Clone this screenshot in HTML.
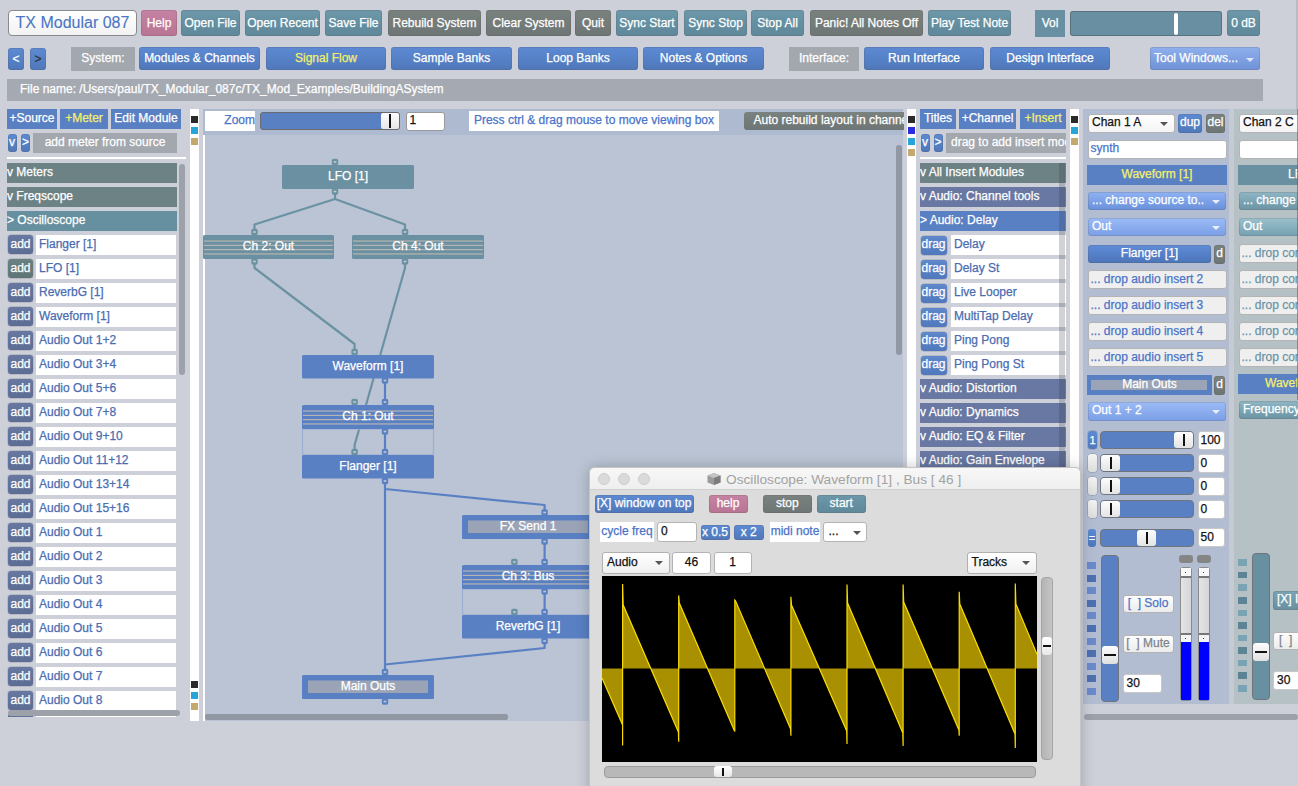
<!DOCTYPE html><html><head><meta charset="utf-8"><style>
html,body{margin:0;padding:0;}
body{width:1298px;height:786px;overflow:hidden;position:relative;background:#cdd0d8;font-family:"Liberation Sans",sans-serif;}
div{position:absolute;box-sizing:border-box;white-space:nowrap;overflow:hidden;-webkit-text-stroke:0.25px currentColor;}
text{-webkit-text-stroke:0.25px currentColor;}

</style></head><body>
<div style="left:8px;top:10px;width:129px;height:26px;line-height:23px;background:linear-gradient(#ffffff,#f2f2f2);color:#4a76c4;font-size:16px;text-align:center;border:1px solid #8a8a8a;border-radius:4px;-webkit-text-stroke:0.1px currentColor;">TX Modular 087</div>
<div style="left:141px;top:10px;width:36px;height:26px;line-height:26px;background:linear-gradient(#c682a2,#b87493);color:#fff;font-size:12px;text-align:center;border-radius:3px;box-shadow:inset 0 0 0 1px rgba(90,80,70,0.18);">Help</div>
<div style="left:181px;top:10px;width:59px;height:26px;line-height:26px;background:linear-gradient(#6c98a9,#5f8899);color:#fff;font-size:12px;text-align:center;border-radius:3px;box-shadow:inset 0 0 0 1px rgba(90,80,70,0.18);">Open File</div>
<div style="left:245px;top:10px;width:75px;height:26px;line-height:26px;background:linear-gradient(#6c98a9,#5f8899);color:#fff;font-size:12px;text-align:center;border-radius:3px;box-shadow:inset 0 0 0 1px rgba(90,80,70,0.18);">Open Recent</div>
<div style="left:325px;top:10px;width:57px;height:26px;line-height:26px;background:linear-gradient(#6c98a9,#5f8899);color:#fff;font-size:12px;text-align:center;border-radius:3px;box-shadow:inset 0 0 0 1px rgba(90,80,70,0.18);">Save File</div>
<div style="left:388px;top:10px;width:93px;height:26px;line-height:26px;background:linear-gradient(#7a8280,#6e7675);color:#fff;font-size:12px;text-align:center;border-radius:3px;box-shadow:inset 0 0 0 1px rgba(90,80,70,0.18);">Rebuild System</div>
<div style="left:486px;top:10px;width:85px;height:26px;line-height:26px;background:linear-gradient(#7a8280,#6e7675);color:#fff;font-size:12px;text-align:center;border-radius:3px;box-shadow:inset 0 0 0 1px rgba(90,80,70,0.18);">Clear System</div>
<div style="left:575px;top:10px;width:36px;height:26px;line-height:26px;background:linear-gradient(#7a8280,#6e7675);color:#fff;font-size:12px;text-align:center;border-radius:3px;box-shadow:inset 0 0 0 1px rgba(90,80,70,0.18);">Quit</div>
<div style="left:616px;top:10px;width:62px;height:26px;line-height:26px;background:linear-gradient(#6c98a9,#5f8899);color:#fff;font-size:12px;text-align:center;border-radius:3px;box-shadow:inset 0 0 0 1px rgba(90,80,70,0.18);">Sync Start</div>
<div style="left:684px;top:10px;width:63px;height:26px;line-height:26px;background:linear-gradient(#6c98a9,#5f8899);color:#fff;font-size:12px;text-align:center;border-radius:3px;box-shadow:inset 0 0 0 1px rgba(90,80,70,0.18);">Sync Stop</div>
<div style="left:751px;top:10px;width:53px;height:26px;line-height:26px;background:linear-gradient(#6c98a9,#5f8899);color:#fff;font-size:12px;text-align:center;border-radius:3px;box-shadow:inset 0 0 0 1px rgba(90,80,70,0.18);">Stop All</div>
<div style="left:810px;top:10px;width:113px;height:26px;line-height:26px;background:linear-gradient(#7a8280,#6e7675);color:#fff;font-size:12px;text-align:center;border-radius:3px;box-shadow:inset 0 0 0 1px rgba(90,80,70,0.18);">Panic! All Notes Off</div>
<div style="left:928px;top:10px;width:83px;height:26px;line-height:26px;background:linear-gradient(#6c98a9,#5f8899);color:#fff;font-size:12px;text-align:center;border-radius:3px;box-shadow:inset 0 0 0 1px rgba(90,80,70,0.18);">Play Test Note</div>
<div style="left:1035px;top:10px;width:30px;height:27px;line-height:27px;background:#6890a2;color:#fff;font-size:12px;text-align:center;">Vol</div>
<div style="left:1070px;top:11px;width:152px;height:25px;line-height:25px;background:#6890a2;color:#fff;font-size:12px;text-align:center;border-radius:3px;box-shadow:inset 0 0 0 1px rgba(60,60,60,0.35);"></div>
<div style="left:1174px;top:13px;width:4px;height:22px;line-height:22px;background:#fff;color:#fff;font-size:12px;text-align:center;border-radius:2px;"></div>
<div style="left:1227px;top:10px;width:33px;height:26px;line-height:26px;background:linear-gradient(#6c98a9,#5f8899);color:#fff;font-size:12px;text-align:center;border-radius:3px;box-shadow:inset 0 0 0 1px rgba(90,80,70,0.18);">0 dB</div>
<div style="left:1296px;top:0px;width:2px;height:109px;line-height:109px;background:#b9bcc4;color:#fff;font-size:12px;text-align:center;"></div>
<div style="left:8px;top:48px;width:16px;height:22px;line-height:22px;background:linear-gradient(#5c8ad3,#4f78ba);color:#fff;font-size:12px;text-align:center;border-radius:3px;box-shadow:inset 0 0 0 1px rgba(90,80,70,0.18);">&lt;</div>
<div style="left:30px;top:48px;width:16px;height:22px;line-height:22px;background:linear-gradient(#5c8ad3,#4f78ba);color:#333;font-size:12px;text-align:center;border-radius:3px;box-shadow:inset 0 0 0 1px rgba(90,80,70,0.18);">&gt;</div>
<div style="left:71px;top:47px;width:64px;height:24px;line-height:23px;background:#a3a7ae;color:#fff;font-size:12px;text-align:center;">System:</div>
<div style="left:139px;top:47px;width:121px;height:23px;line-height:23px;background:linear-gradient(#5c8ad3,#4f78ba);color:#fff;font-size:12px;text-align:center;border-radius:3px;box-shadow:inset 0 0 0 1px rgba(90,80,70,0.18);">Modules &amp; Channels</div>
<div style="left:266px;top:47px;width:120px;height:23px;line-height:23px;background:linear-gradient(#5c8ad3,#4f78ba);color:#f4f06a;font-size:12px;text-align:center;border-radius:3px;box-shadow:inset 0 0 0 1px rgba(90,80,70,0.18);">Signal Flow</div>
<div style="left:391px;top:47px;width:121px;height:23px;line-height:23px;background:linear-gradient(#5c8ad3,#4f78ba);color:#fff;font-size:12px;text-align:center;border-radius:3px;box-shadow:inset 0 0 0 1px rgba(90,80,70,0.18);">Sample Banks</div>
<div style="left:518px;top:47px;width:120px;height:23px;line-height:23px;background:linear-gradient(#5c8ad3,#4f78ba);color:#fff;font-size:12px;text-align:center;border-radius:3px;box-shadow:inset 0 0 0 1px rgba(90,80,70,0.18);">Loop Banks</div>
<div style="left:643px;top:47px;width:121px;height:23px;line-height:23px;background:linear-gradient(#5c8ad3,#4f78ba);color:#fff;font-size:12px;text-align:center;border-radius:3px;box-shadow:inset 0 0 0 1px rgba(90,80,70,0.18);">Notes &amp; Options</div>
<div style="left:789px;top:47px;width:70px;height:24px;line-height:23px;background:#a3a7ae;color:#fff;font-size:12px;text-align:center;">Interface:</div>
<div style="left:864px;top:47px;width:120px;height:23px;line-height:23px;background:linear-gradient(#5c8ad3,#4f78ba);color:#fff;font-size:12px;text-align:center;border-radius:3px;box-shadow:inset 0 0 0 1px rgba(90,80,70,0.18);">Run Interface</div>
<div style="left:990px;top:47px;width:120px;height:23px;line-height:23px;background:linear-gradient(#5c8ad3,#4f78ba);color:#fff;font-size:12px;text-align:center;border-radius:3px;box-shadow:inset 0 0 0 1px rgba(90,80,70,0.18);">Design Interface</div>
<div style="left:1150px;top:47px;width:110px;height:23px;line-height:23px;background:linear-gradient(#8fb0ec,#6f92d8);color:#fff;font-size:12px;text-align:left;padding-left:4px;box-sizing:border-box;border-radius:3px;box-shadow:inset 0 0 0 1px rgba(90,80,70,0.18);">Tool Windows...</div>
<div style="left:1246px;top:57.5px;width:0;height:0;border-left:4px solid transparent;border-right:4px solid transparent;border-top:4.5px solid #dfe6f6;overflow:visible"></div>
<div style="left:7px;top:79px;width:1256px;height:22px;line-height:21px;background:#a5a9b1;color:#fff;font-size:12px;text-align:left;padding-left:13px;box-sizing:border-box;">File name: /Users/paul/TX_Modular_087c/TX_Mod_Examples/BuildingASystem</div>
<div style="left:7px;top:109px;width:50px;height:20px;line-height:18px;background:#5a80c4;color:#fff;font-size:12px;text-align:center;">+Source</div>
<div style="left:60px;top:109px;width:48px;height:20px;line-height:18px;background:#5a80c4;color:#f4f06a;font-size:12px;text-align:center;">+Meter</div>
<div style="left:111px;top:109px;width:70px;height:20px;line-height:18px;background:#5a80c4;color:#fff;font-size:12px;text-align:center;">Edit Module</div>
<div style="left:7.5px;top:133.5px;width:9px;height:18.5px;line-height:16px;background:linear-gradient(#5c8ad3,#4f78ba);color:#fff;font-size:12px;text-align:center;border-radius:3px;box-shadow:inset 0 0 0 1px rgba(90,80,70,0.18);">v</div>
<div style="left:21px;top:133.5px;width:9px;height:18.5px;line-height:17px;background:linear-gradient(#5c8ad3,#4f78ba);color:#fff;font-size:12px;text-align:center;border-radius:3px;box-shadow:inset 0 0 0 1px rgba(90,80,70,0.18);">&gt;</div>
<div style="left:33px;top:133px;width:144px;height:20px;line-height:18px;background:#a3a7ae;color:#fff;font-size:12px;text-align:center;">add meter from source</div>
<div style="left:7px;top:157px;width:179px;height:2px;line-height:2px;background:#ffffff;color:#fff;font-size:12px;text-align:center;"></div>
<div style="left:7px;top:163px;width:170px;height:20px;line-height:18px;background:#6d8285;color:#fff;font-size:12px;text-align:left;">v Meters</div>
<div style="left:7px;top:187px;width:170px;height:20px;line-height:18px;background:#6d8285;color:#fff;font-size:12px;text-align:left;">v Freqscope</div>
<div style="left:7px;top:211px;width:170px;height:20px;line-height:18px;background:#66909f;color:#fff;font-size:12px;text-align:left;">&gt; Oscilloscope</div>
<div style="left:8px;top:235px;width:25px;height:19px;line-height:19px;background:linear-gradient(#6878a0,#5c6c94);color:#fff;font-size:12px;text-align:center;border-radius:3px;box-shadow:0 0 0 0.5px rgba(60,60,60,0.3);">add</div>
<div style="left:36px;top:235px;width:140px;height:20px;line-height:18px;background:#fff;color:#4a6cb0;font-size:12px;text-align:left;padding-left:3px;box-sizing:border-box;">Flanger [1]</div>
<div style="left:8px;top:259px;width:25px;height:19px;line-height:19px;background:linear-gradient(#6a8181,#5f7575);color:#fff;font-size:12px;text-align:center;border-radius:3px;box-shadow:0 0 0 0.5px rgba(60,60,60,0.3);">add</div>
<div style="left:36px;top:259px;width:140px;height:20px;line-height:18px;background:#fff;color:#4a6cb0;font-size:12px;text-align:left;padding-left:3px;box-sizing:border-box;">LFO [1]</div>
<div style="left:8px;top:283px;width:25px;height:19px;line-height:19px;background:linear-gradient(#6878a0,#5c6c94);color:#fff;font-size:12px;text-align:center;border-radius:3px;box-shadow:0 0 0 0.5px rgba(60,60,60,0.3);">add</div>
<div style="left:36px;top:283px;width:140px;height:20px;line-height:18px;background:#fff;color:#4a6cb0;font-size:12px;text-align:left;padding-left:3px;box-sizing:border-box;">ReverbG [1]</div>
<div style="left:8px;top:307px;width:25px;height:19px;line-height:19px;background:linear-gradient(#6878a0,#5c6c94);color:#fff;font-size:12px;text-align:center;border-radius:3px;box-shadow:0 0 0 0.5px rgba(60,60,60,0.3);">add</div>
<div style="left:36px;top:307px;width:140px;height:20px;line-height:18px;background:#fff;color:#4a6cb0;font-size:12px;text-align:left;padding-left:3px;box-sizing:border-box;">Waveform [1]</div>
<div style="left:8px;top:331px;width:25px;height:19px;line-height:19px;background:linear-gradient(#6878a0,#5c6c94);color:#fff;font-size:12px;text-align:center;border-radius:3px;box-shadow:0 0 0 0.5px rgba(60,60,60,0.3);">add</div>
<div style="left:36px;top:331px;width:140px;height:20px;line-height:18px;background:#fff;color:#4a6cb0;font-size:12px;text-align:left;padding-left:3px;box-sizing:border-box;">Audio Out 1+2</div>
<div style="left:8px;top:355px;width:25px;height:19px;line-height:19px;background:linear-gradient(#6878a0,#5c6c94);color:#fff;font-size:12px;text-align:center;border-radius:3px;box-shadow:0 0 0 0.5px rgba(60,60,60,0.3);">add</div>
<div style="left:36px;top:355px;width:140px;height:20px;line-height:18px;background:#fff;color:#4a6cb0;font-size:12px;text-align:left;padding-left:3px;box-sizing:border-box;">Audio Out 3+4</div>
<div style="left:8px;top:379px;width:25px;height:19px;line-height:19px;background:linear-gradient(#6878a0,#5c6c94);color:#fff;font-size:12px;text-align:center;border-radius:3px;box-shadow:0 0 0 0.5px rgba(60,60,60,0.3);">add</div>
<div style="left:36px;top:379px;width:140px;height:20px;line-height:18px;background:#fff;color:#4a6cb0;font-size:12px;text-align:left;padding-left:3px;box-sizing:border-box;">Audio Out 5+6</div>
<div style="left:8px;top:403px;width:25px;height:19px;line-height:19px;background:linear-gradient(#6878a0,#5c6c94);color:#fff;font-size:12px;text-align:center;border-radius:3px;box-shadow:0 0 0 0.5px rgba(60,60,60,0.3);">add</div>
<div style="left:36px;top:403px;width:140px;height:20px;line-height:18px;background:#fff;color:#4a6cb0;font-size:12px;text-align:left;padding-left:3px;box-sizing:border-box;">Audio Out 7+8</div>
<div style="left:8px;top:427px;width:25px;height:19px;line-height:19px;background:linear-gradient(#6878a0,#5c6c94);color:#fff;font-size:12px;text-align:center;border-radius:3px;box-shadow:0 0 0 0.5px rgba(60,60,60,0.3);">add</div>
<div style="left:36px;top:427px;width:140px;height:20px;line-height:18px;background:#fff;color:#4a6cb0;font-size:12px;text-align:left;padding-left:3px;box-sizing:border-box;">Audio Out 9+10</div>
<div style="left:8px;top:451px;width:25px;height:19px;line-height:19px;background:linear-gradient(#6878a0,#5c6c94);color:#fff;font-size:12px;text-align:center;border-radius:3px;box-shadow:0 0 0 0.5px rgba(60,60,60,0.3);">add</div>
<div style="left:36px;top:451px;width:140px;height:20px;line-height:18px;background:#fff;color:#4a6cb0;font-size:12px;text-align:left;padding-left:3px;box-sizing:border-box;">Audio Out 11+12</div>
<div style="left:8px;top:475px;width:25px;height:19px;line-height:19px;background:linear-gradient(#6878a0,#5c6c94);color:#fff;font-size:12px;text-align:center;border-radius:3px;box-shadow:0 0 0 0.5px rgba(60,60,60,0.3);">add</div>
<div style="left:36px;top:475px;width:140px;height:20px;line-height:18px;background:#fff;color:#4a6cb0;font-size:12px;text-align:left;padding-left:3px;box-sizing:border-box;">Audio Out 13+14</div>
<div style="left:8px;top:499px;width:25px;height:19px;line-height:19px;background:linear-gradient(#6878a0,#5c6c94);color:#fff;font-size:12px;text-align:center;border-radius:3px;box-shadow:0 0 0 0.5px rgba(60,60,60,0.3);">add</div>
<div style="left:36px;top:499px;width:140px;height:20px;line-height:18px;background:#fff;color:#4a6cb0;font-size:12px;text-align:left;padding-left:3px;box-sizing:border-box;">Audio Out 15+16</div>
<div style="left:8px;top:523px;width:25px;height:19px;line-height:19px;background:linear-gradient(#6878a0,#5c6c94);color:#fff;font-size:12px;text-align:center;border-radius:3px;box-shadow:0 0 0 0.5px rgba(60,60,60,0.3);">add</div>
<div style="left:36px;top:523px;width:140px;height:20px;line-height:18px;background:#fff;color:#4a6cb0;font-size:12px;text-align:left;padding-left:3px;box-sizing:border-box;">Audio Out 1</div>
<div style="left:8px;top:547px;width:25px;height:19px;line-height:19px;background:linear-gradient(#6878a0,#5c6c94);color:#fff;font-size:12px;text-align:center;border-radius:3px;box-shadow:0 0 0 0.5px rgba(60,60,60,0.3);">add</div>
<div style="left:36px;top:547px;width:140px;height:20px;line-height:18px;background:#fff;color:#4a6cb0;font-size:12px;text-align:left;padding-left:3px;box-sizing:border-box;">Audio Out 2</div>
<div style="left:8px;top:571px;width:25px;height:19px;line-height:19px;background:linear-gradient(#6878a0,#5c6c94);color:#fff;font-size:12px;text-align:center;border-radius:3px;box-shadow:0 0 0 0.5px rgba(60,60,60,0.3);">add</div>
<div style="left:36px;top:571px;width:140px;height:20px;line-height:18px;background:#fff;color:#4a6cb0;font-size:12px;text-align:left;padding-left:3px;box-sizing:border-box;">Audio Out 3</div>
<div style="left:8px;top:595px;width:25px;height:19px;line-height:19px;background:linear-gradient(#6878a0,#5c6c94);color:#fff;font-size:12px;text-align:center;border-radius:3px;box-shadow:0 0 0 0.5px rgba(60,60,60,0.3);">add</div>
<div style="left:36px;top:595px;width:140px;height:20px;line-height:18px;background:#fff;color:#4a6cb0;font-size:12px;text-align:left;padding-left:3px;box-sizing:border-box;">Audio Out 4</div>
<div style="left:8px;top:619px;width:25px;height:19px;line-height:19px;background:linear-gradient(#6878a0,#5c6c94);color:#fff;font-size:12px;text-align:center;border-radius:3px;box-shadow:0 0 0 0.5px rgba(60,60,60,0.3);">add</div>
<div style="left:36px;top:619px;width:140px;height:20px;line-height:18px;background:#fff;color:#4a6cb0;font-size:12px;text-align:left;padding-left:3px;box-sizing:border-box;">Audio Out 5</div>
<div style="left:8px;top:643px;width:25px;height:19px;line-height:19px;background:linear-gradient(#6878a0,#5c6c94);color:#fff;font-size:12px;text-align:center;border-radius:3px;box-shadow:0 0 0 0.5px rgba(60,60,60,0.3);">add</div>
<div style="left:36px;top:643px;width:140px;height:20px;line-height:18px;background:#fff;color:#4a6cb0;font-size:12px;text-align:left;padding-left:3px;box-sizing:border-box;">Audio Out 6</div>
<div style="left:8px;top:667px;width:25px;height:19px;line-height:19px;background:linear-gradient(#6878a0,#5c6c94);color:#fff;font-size:12px;text-align:center;border-radius:3px;box-shadow:0 0 0 0.5px rgba(60,60,60,0.3);">add</div>
<div style="left:36px;top:667px;width:140px;height:20px;line-height:18px;background:#fff;color:#4a6cb0;font-size:12px;text-align:left;padding-left:3px;box-sizing:border-box;">Audio Out 7</div>
<div style="left:8px;top:691px;width:25px;height:19px;line-height:19px;background:linear-gradient(#6878a0,#5c6c94);color:#fff;font-size:12px;text-align:center;border-radius:3px;box-shadow:0 0 0 0.5px rgba(60,60,60,0.3);">add</div>
<div style="left:36px;top:691px;width:140px;height:20px;line-height:18px;background:#fff;color:#4a6cb0;font-size:12px;text-align:left;padding-left:3px;box-sizing:border-box;">Audio Out 8</div>
<div style="left:8px;top:715px;width:25px;height:1.6px;line-height:1.6px;background:#62729a;color:#fff;font-size:12px;text-align:center;"></div>
<div style="left:36px;top:715px;width:140px;height:1.6px;line-height:1.6px;background:#fff;color:#fff;font-size:12px;text-align:center;"></div>
<div style="left:179px;top:164px;width:6px;height:211px;line-height:211px;background:#9da1a9;color:#fff;font-size:12px;text-align:center;border-radius:3px;"></div>
<div style="left:8px;top:710px;width:172px;height:6px;line-height:6px;background:#9da1a9;color:#fff;font-size:12px;text-align:center;border-radius:3px;"></div>
<div style="left:190px;top:109px;width:9px;height:612px;line-height:612px;background:#fff;color:#fff;font-size:12px;text-align:center;"></div>
<div style="left:191px;top:116px;width:7px;height:7px;line-height:7px;background:#2a2a2a;color:#fff;font-size:12px;text-align:center;"></div>
<div style="left:191px;top:127px;width:7px;height:7px;line-height:7px;background:#27a4d8;color:#fff;font-size:12px;text-align:center;"></div>
<div style="left:191px;top:138px;width:7px;height:7px;line-height:7px;background:#c4a870;color:#fff;font-size:12px;text-align:center;"></div>
<div style="left:191px;top:681px;width:7px;height:7px;line-height:7px;background:#2a2a2a;color:#fff;font-size:12px;text-align:center;"></div>
<div style="left:191px;top:692px;width:7px;height:7px;line-height:7px;background:#27a4d8;color:#fff;font-size:12px;text-align:center;"></div>
<div style="left:191px;top:703px;width:7px;height:7px;line-height:7px;background:#c4a870;color:#fff;font-size:12px;text-align:center;"></div>
<div style="left:203px;top:109px;width:700px;height:26px;line-height:26px;background:#aebad0;color:#fff;font-size:12px;text-align:center;"></div>
<div style="left:203px;top:135px;width:2px;height:586px;line-height:586px;background:#ffffff;color:#fff;font-size:12px;text-align:center;"></div>
<div style="left:205px;top:135px;width:698px;height:586px;line-height:586px;background:#bac4d4;color:#fff;font-size:12px;text-align:center;"></div>
<div style="left:205px;top:111px;width:50px;height:20px;line-height:18px;background:#fff;color:#4a74c8;font-size:12px;text-align:right;">Zoom</div>
<div style="left:260px;top:112px;width:140px;height:18px;line-height:15px;background:#5a80c4;color:#fff;font-size:12px;text-align:center;border:1px solid #6a6a70;border-radius:3px;"></div>
<div style="left:381px;top:113px;width:18px;height:16px;line-height:16px;background:linear-gradient(#fdfdfd,#e6e6e6);color:#fff;font-size:12px;text-align:center;border-radius:2px;"></div>
<div style="left:389px;top:114px;width:2px;height:14px;line-height:14px;background:#111;color:#fff;font-size:12px;text-align:center;"></div>
<div style="left:405.5px;top:111.5px;width:39px;height:19px;line-height:15px;background:#fff;color:#111;font-size:12px;text-align:left;padding-left:3px;box-sizing:border-box;border:1px solid #999;border-radius:3px;">1</div>
<div style="left:469px;top:111px;width:250px;height:20px;line-height:18px;background:#fff;color:#4a74c8;font-size:12px;text-align:center;">Press ctrl &amp; drag mouse to move viewing box</div>
<div style="left:743.5px;top:111.5px;width:160px;height:18.5px;line-height:16px;background:linear-gradient(#7a8280,#6e7675);color:#fff;font-size:12px;text-align:left;padding-left:10px;box-sizing:border-box;border-radius:3px 0 0 3px;">Auto rebuild layout in channe</div>
<div style="left:896px;top:145px;width:6px;height:210px;line-height:210px;background:#9198a4;color:#fff;font-size:12px;text-align:center;border-radius:3px;"></div>
<div style="left:205px;top:714px;width:303px;height:6px;line-height:6px;background:#9198a4;color:#fff;font-size:12px;text-align:center;border-radius:3px;"></div>
<div style="left:907px;top:109px;width:9px;height:612px;line-height:612px;background:#fff;color:#fff;font-size:12px;text-align:center;"></div>
<div style="left:908px;top:116px;width:7px;height:7px;line-height:7px;background:#2a2a2a;color:#fff;font-size:12px;text-align:center;"></div>
<div style="left:908px;top:127px;width:7px;height:7px;line-height:7px;background:#2b2be0;color:#fff;font-size:12px;text-align:center;"></div>
<div style="left:908px;top:138px;width:7px;height:7px;line-height:7px;background:#27a4d8;color:#fff;font-size:12px;text-align:center;"></div>
<div style="left:908px;top:149px;width:7px;height:7px;line-height:7px;background:#c4a870;color:#fff;font-size:12px;text-align:center;"></div>
<svg style="position:absolute;left:0;top:0;overflow:visible" width="1298" height="786" viewBox="0 0 1298 786"><g font-family="Liberation Sans, sans-serif"><polyline points="335,194 335,199 254.5,224.5 254.5,230" fill="none" stroke="#6a92a3" stroke-width="2.2" stroke-linejoin="round"/><polyline points="335,199 405,224.5 405,230" fill="none" stroke="#6a92a3" stroke-width="2.2" stroke-linejoin="round"/><polyline points="254.5,264 254.5,268 354.6,344 354.6,350" fill="none" stroke="#6a92a3" stroke-width="2.2" stroke-linejoin="round"/><polyline points="405,264 405,268 354.6,445 354.6,450" fill="none" stroke="#6a92a3" stroke-width="2.2" stroke-linejoin="round"/><polyline points="385,383 385,400" fill="none" stroke="#5a80c4" stroke-width="2.2" stroke-linejoin="round"/><polyline points="385,434 385,450" fill="none" stroke="#5a80c4" stroke-width="2.2" stroke-linejoin="round"/><polyline points="385,484 385,489 544.6,505 544.6,511" fill="none" stroke="#5a80c4" stroke-width="2.2" stroke-linejoin="round"/><polyline points="385,489 385,664.5 385,670" fill="none" stroke="#5a80c4" stroke-width="2.2" stroke-linejoin="round"/><polyline points="544.6,544 544.6,560" fill="none" stroke="#5a80c4" stroke-width="2.2" stroke-linejoin="round"/><polyline points="544.6,594 544.6,610" fill="none" stroke="#5a80c4" stroke-width="2.2" stroke-linejoin="round"/><polyline points="544.6,644 544.6,648 385,664.5" fill="none" stroke="#5a80c4" stroke-width="2.2" stroke-linejoin="round"/><rect x="302.5" y="429" width="131" height="26" fill="none" stroke="#9eaed0" stroke-width="1.2"/><rect x="462.5" y="589" width="140" height="26" fill="none" stroke="#9eaed0" stroke-width="1.2"/><rect x="282" y="165" width="132" height="24" rx="1.5" fill="#6a90a2"/><text x="348.0" y="179.9" text-anchor="middle" font-size="12" fill="#fff" stroke="#fff" stroke-width="0.25">LFO [1]</text><rect x="203" y="235" width="131" height="24" rx="1.5" fill="#6a90a2"/><rect x="204" y="240.5" width="129" height="1.1" fill="#bdb9b2"/><rect x="204" y="244.8" width="129" height="1.1" fill="#bdb9b2"/><rect x="204" y="249.1" width="129" height="1.1" fill="#bdb9b2"/><rect x="204" y="253.4" width="129" height="1.1" fill="#bdb9b2"/><text x="268.5" y="249.9" text-anchor="middle" font-size="12" fill="#fff" stroke="#fff" stroke-width="0.25">Ch 2: Out</text><rect x="352" y="235" width="132" height="24" rx="1.5" fill="#6a90a2"/><rect x="353" y="240.5" width="130" height="1.1" fill="#bdb9b2"/><rect x="353" y="244.8" width="130" height="1.1" fill="#bdb9b2"/><rect x="353" y="249.1" width="130" height="1.1" fill="#bdb9b2"/><rect x="353" y="253.4" width="130" height="1.1" fill="#bdb9b2"/><text x="418.0" y="249.9" text-anchor="middle" font-size="12" fill="#fff" stroke="#fff" stroke-width="0.25">Ch 4: Out</text><rect x="302" y="355" width="132" height="23.5" rx="1.5" fill="#5a80c4"/><text x="368.0" y="369.65" text-anchor="middle" font-size="12" fill="#fff" stroke="#fff" stroke-width="0.25">Waveform [1]</text><rect x="302" y="405" width="132" height="24" rx="1.5" fill="#5a80c4"/><rect x="303" y="410.5" width="130" height="1.1" fill="#bdb9b2"/><rect x="303" y="414.8" width="130" height="1.1" fill="#bdb9b2"/><rect x="303" y="419.1" width="130" height="1.1" fill="#bdb9b2"/><rect x="303" y="423.4" width="130" height="1.1" fill="#bdb9b2"/><text x="368.0" y="419.9" text-anchor="middle" font-size="12" fill="#fff" stroke="#fff" stroke-width="0.25">Ch 1: Out</text><rect x="302" y="455" width="132" height="23.5" rx="1.5" fill="#5a80c4"/><text x="368.0" y="469.65" text-anchor="middle" font-size="12" fill="#fff" stroke="#fff" stroke-width="0.25">Flanger [1]</text><rect x="462" y="515" width="132" height="24" rx="1.5" fill="#5a80c4"/><rect x="468" y="520.5" width="120" height="12.5" fill="#9ba4b6"/><text x="528.0" y="529.9" text-anchor="middle" font-size="12" fill="#fff" stroke="#fff" stroke-width="0.25">FX Send 1</text><rect x="462" y="565" width="132" height="24" rx="1.5" fill="#5a80c4"/><rect x="463" y="570.5" width="130" height="1.1" fill="#bdb9b2"/><rect x="463" y="574.8" width="130" height="1.1" fill="#bdb9b2"/><rect x="463" y="579.1" width="130" height="1.1" fill="#bdb9b2"/><rect x="463" y="583.4" width="130" height="1.1" fill="#bdb9b2"/><text x="528.0" y="579.9" text-anchor="middle" font-size="12" fill="#fff" stroke="#fff" stroke-width="0.25">Ch 3: Bus</text><rect x="462" y="615" width="132" height="23.5" rx="1.5" fill="#5a80c4"/><text x="528.0" y="629.65" text-anchor="middle" font-size="12" fill="#fff" stroke="#fff" stroke-width="0.25">ReverbG [1]</text><rect x="302" y="675" width="132" height="24" rx="1.5" fill="#5a80c4"/><rect x="308" y="680.5" width="120" height="12.5" fill="#9ba4b6"/><text x="368.0" y="689.9" text-anchor="middle" font-size="12" fill="#fff" stroke="#fff" stroke-width="0.25">Main Outs</text><rect x="331.8" y="158.8" width="6.4" height="6.4" rx="1.8" fill="#6a92a3"/><rect x="333.7" y="161.2" width="2.6" height="1.6" fill="#c2cad6"/><rect x="331.8" y="188.3" width="6.4" height="6.4" rx="1.8" fill="#6a92a3"/><rect x="333.7" y="190.7" width="2.6" height="1.6" fill="#c2cad6"/><rect x="251.3" y="228.8" width="6.4" height="6.4" rx="1.8" fill="#6a92a3"/><rect x="253.2" y="231.2" width="2.6" height="1.6" fill="#c2cad6"/><rect x="251.3" y="258.3" width="6.4" height="6.4" rx="1.8" fill="#6a92a3"/><rect x="253.2" y="260.7" width="2.6" height="1.6" fill="#c2cad6"/><rect x="401.8" y="228.8" width="6.4" height="6.4" rx="1.8" fill="#6a92a3"/><rect x="403.7" y="231.2" width="2.6" height="1.6" fill="#c2cad6"/><rect x="401.8" y="258.3" width="6.4" height="6.4" rx="1.8" fill="#6a92a3"/><rect x="403.7" y="260.7" width="2.6" height="1.6" fill="#c2cad6"/><rect x="351.40000000000003" y="348.8" width="6.4" height="6.4" rx="1.8" fill="#6a92a3"/><rect x="353.3" y="351.2" width="2.6" height="1.6" fill="#c2cad6"/><rect x="381.8" y="377.3" width="6.4" height="6.4" rx="1.8" fill="#5a80c4"/><rect x="383.7" y="379.7" width="2.6" height="1.6" fill="#c2cad6"/><rect x="351.40000000000003" y="398.8" width="6.4" height="6.4" rx="1.8" fill="#6a92a3"/><rect x="353.3" y="401.2" width="2.6" height="1.6" fill="#c2cad6"/><rect x="381.8" y="398.8" width="6.4" height="6.4" rx="1.8" fill="#5a80c4"/><rect x="383.7" y="401.2" width="2.6" height="1.6" fill="#c2cad6"/><rect x="381.8" y="428.3" width="6.4" height="6.4" rx="1.8" fill="#5a80c4"/><rect x="383.7" y="430.7" width="2.6" height="1.6" fill="#c2cad6"/><rect x="351.40000000000003" y="448.8" width="6.4" height="6.4" rx="1.8" fill="#6a92a3"/><rect x="353.3" y="451.2" width="2.6" height="1.6" fill="#c2cad6"/><rect x="381.8" y="448.8" width="6.4" height="6.4" rx="1.8" fill="#5a80c4"/><rect x="383.7" y="451.2" width="2.6" height="1.6" fill="#c2cad6"/><rect x="381.8" y="477.8" width="6.4" height="6.4" rx="1.8" fill="#5a80c4"/><rect x="383.7" y="480.2" width="2.6" height="1.6" fill="#c2cad6"/><rect x="541.4" y="509.3" width="6.4" height="6.4" rx="1.8" fill="#5a80c4"/><rect x="543.3000000000001" y="511.7" width="2.6" height="1.6" fill="#c2cad6"/><rect x="541.4" y="538.3" width="6.4" height="6.4" rx="1.8" fill="#5a80c4"/><rect x="543.3000000000001" y="540.7" width="2.6" height="1.6" fill="#c2cad6"/><rect x="511.2" y="558.8" width="6.4" height="6.4" rx="1.8" fill="#6a92a3"/><rect x="513.1" y="561.2" width="2.6" height="1.6" fill="#c2cad6"/><rect x="541.4" y="558.8" width="6.4" height="6.4" rx="1.8" fill="#5a80c4"/><rect x="543.3000000000001" y="561.2" width="2.6" height="1.6" fill="#c2cad6"/><rect x="541.4" y="588.3" width="6.4" height="6.4" rx="1.8" fill="#5a80c4"/><rect x="543.3000000000001" y="590.7" width="2.6" height="1.6" fill="#c2cad6"/><rect x="511.2" y="608.8" width="6.4" height="6.4" rx="1.8" fill="#6a92a3"/><rect x="513.1" y="611.2" width="2.6" height="1.6" fill="#c2cad6"/><rect x="541.4" y="608.8" width="6.4" height="6.4" rx="1.8" fill="#5a80c4"/><rect x="543.3000000000001" y="611.2" width="2.6" height="1.6" fill="#c2cad6"/><rect x="541.4" y="637.8" width="6.4" height="6.4" rx="1.8" fill="#5a80c4"/><rect x="543.3000000000001" y="640.2" width="2.6" height="1.6" fill="#c2cad6"/><rect x="381.8" y="668.8" width="6.4" height="6.4" rx="1.8" fill="#5a80c4"/><rect x="383.7" y="671.2" width="2.6" height="1.6" fill="#c2cad6"/><rect x="381.8" y="698.3" width="6.4" height="6.4" rx="1.8" fill="#5a80c4"/><rect x="383.7" y="700.7" width="2.6" height="1.6" fill="#c2cad6"/></g></svg>
<div style="left:199px;top:135px;width:4px;height:586px;line-height:586px;background:#cdd0d8;color:#fff;font-size:12px;text-align:center;"></div>
<div style="left:203px;top:135px;width:2px;height:100px;line-height:100px;background:#ffffff;color:#fff;font-size:12px;text-align:center;"></div>
<div style="left:203px;top:259px;width:2px;height:462px;line-height:462px;background:#ffffff;color:#fff;font-size:12px;text-align:center;"></div>
<div style="left:205px;top:714px;width:303px;height:6px;line-height:6px;background:#9198a4;color:#fff;font-size:12px;text-align:center;border-radius:3px;"></div>
<div style="left:920px;top:109px;width:36px;height:20px;line-height:18px;background:#5a80c4;color:#fff;font-size:12px;text-align:center;">Titles</div>
<div style="left:959px;top:109px;width:57px;height:20px;line-height:18px;background:#5a80c4;color:#fff;font-size:12px;text-align:center;">+Channel</div>
<div style="left:1020px;top:109px;width:46px;height:20px;line-height:18px;background:#5a80c4;color:#f4f06a;font-size:12px;text-align:center;">+Insert</div>
<div style="left:920.5px;top:133.5px;width:9px;height:18.5px;line-height:16px;background:linear-gradient(#5c8ad3,#4f78ba);color:#fff;font-size:12px;text-align:center;border-radius:3px;box-shadow:inset 0 0 0 1px rgba(90,80,70,0.18);">v</div>
<div style="left:933.5px;top:133.5px;width:9px;height:18.5px;line-height:17px;background:linear-gradient(#5c8ad3,#4f78ba);color:#fff;font-size:12px;text-align:center;border-radius:3px;box-shadow:inset 0 0 0 1px rgba(90,80,70,0.18);">&gt;</div>
<div style="left:946px;top:133px;width:120px;height:20px;line-height:18px;background:#a3a7ae;color:#fff;font-size:12px;text-align:left;padding-left:5px;box-sizing:border-box;">drag to add insert modules</div>
<div style="left:920px;top:157px;width:146px;height:2px;line-height:2px;background:#ffffff;color:#fff;font-size:12px;text-align:center;"></div>
<div style="left:920px;top:163px;width:146px;height:20px;line-height:18px;background:#6d8285;color:#fff;font-size:12px;text-align:left;">v All Insert Modules</div>
<div style="left:920px;top:187px;width:146px;height:20px;line-height:18px;background:#6878a3;color:#fff;font-size:12px;text-align:left;">v Audio: Channel tools</div>
<div style="left:920px;top:211px;width:146px;height:20px;line-height:18px;background:#5a80c4;color:#fff;font-size:12px;text-align:left;">&gt; Audio: Delay</div>
<div style="left:920px;top:379px;width:146px;height:20px;line-height:18px;background:#6878a3;color:#fff;font-size:12px;text-align:left;">v Audio: Distortion</div>
<div style="left:920px;top:403px;width:146px;height:20px;line-height:18px;background:#6878a3;color:#fff;font-size:12px;text-align:left;">v Audio: Dynamics</div>
<div style="left:920px;top:427px;width:146px;height:20px;line-height:18px;background:#6878a3;color:#fff;font-size:12px;text-align:left;">v Audio: EQ &amp; Filter</div>
<div style="left:920px;top:451px;width:146px;height:20px;line-height:18px;background:#6878a3;color:#fff;font-size:12px;text-align:left;">v Audio: Gain Envelope</div>
<div style="left:920.5px;top:236px;width:26.5px;height:18.5px;line-height:16px;background:linear-gradient(#5f88cc,#5078bc);color:#fff;font-size:12px;text-align:left;padding-left:1px;box-sizing:border-box;border-radius:3px;box-shadow:0 0 0 0.5px rgba(60,60,60,0.3);">drag</div>
<div style="left:951px;top:235px;width:115px;height:20px;line-height:18px;background:#fff;color:#4a6cb0;font-size:12px;text-align:left;padding-left:3px;box-sizing:border-box;">Delay</div>
<div style="left:920.5px;top:260px;width:26.5px;height:18.5px;line-height:16px;background:linear-gradient(#5f88cc,#5078bc);color:#fff;font-size:12px;text-align:left;padding-left:1px;box-sizing:border-box;border-radius:3px;box-shadow:0 0 0 0.5px rgba(60,60,60,0.3);">drag</div>
<div style="left:951px;top:259px;width:115px;height:20px;line-height:18px;background:#fff;color:#4a6cb0;font-size:12px;text-align:left;padding-left:3px;box-sizing:border-box;">Delay St</div>
<div style="left:920.5px;top:284px;width:26.5px;height:18.5px;line-height:16px;background:linear-gradient(#5f88cc,#5078bc);color:#fff;font-size:12px;text-align:left;padding-left:1px;box-sizing:border-box;border-radius:3px;box-shadow:0 0 0 0.5px rgba(60,60,60,0.3);">drag</div>
<div style="left:951px;top:283px;width:115px;height:20px;line-height:18px;background:#fff;color:#4a6cb0;font-size:12px;text-align:left;padding-left:3px;box-sizing:border-box;">Live Looper</div>
<div style="left:920.5px;top:308px;width:26.5px;height:18.5px;line-height:16px;background:linear-gradient(#5f88cc,#5078bc);color:#fff;font-size:12px;text-align:left;padding-left:1px;box-sizing:border-box;border-radius:3px;box-shadow:0 0 0 0.5px rgba(60,60,60,0.3);">drag</div>
<div style="left:951px;top:307px;width:115px;height:20px;line-height:18px;background:#fff;color:#4a6cb0;font-size:12px;text-align:left;padding-left:3px;box-sizing:border-box;">MultiTap Delay</div>
<div style="left:920.5px;top:332px;width:26.5px;height:18.5px;line-height:16px;background:linear-gradient(#5f88cc,#5078bc);color:#fff;font-size:12px;text-align:left;padding-left:1px;box-sizing:border-box;border-radius:3px;box-shadow:0 0 0 0.5px rgba(60,60,60,0.3);">drag</div>
<div style="left:951px;top:331px;width:115px;height:20px;line-height:18px;background:#fff;color:#4a6cb0;font-size:12px;text-align:left;padding-left:3px;box-sizing:border-box;">Ping Pong</div>
<div style="left:920.5px;top:356px;width:26.5px;height:18.5px;line-height:16px;background:linear-gradient(#5f88cc,#5078bc);color:#fff;font-size:12px;text-align:left;padding-left:1px;box-sizing:border-box;border-radius:3px;box-shadow:0 0 0 0.5px rgba(60,60,60,0.3);">drag</div>
<div style="left:951px;top:355px;width:115px;height:20px;line-height:18px;background:#fff;color:#4a6cb0;font-size:12px;text-align:left;padding-left:3px;box-sizing:border-box;">Ping Pong St</div>
<div style="left:1059px;top:163px;width:6px;height:310px;line-height:310px;background:rgba(40,50,60,0.22);color:#fff;font-size:12px;text-align:center;"></div>
<div style="left:1070px;top:109px;width:9px;height:612px;line-height:612px;background:#fff;color:#fff;font-size:12px;text-align:center;"></div>
<div style="left:1071px;top:116px;width:7px;height:7px;line-height:7px;background:#2a2a2a;color:#fff;font-size:12px;text-align:center;"></div>
<div style="left:1071px;top:127px;width:7px;height:7px;line-height:7px;background:#27a4d8;color:#fff;font-size:12px;text-align:center;"></div>
<div style="left:1071px;top:138px;width:7px;height:7px;line-height:7px;background:#c4a870;color:#fff;font-size:12px;text-align:center;"></div>
<div style="left:1083px;top:109px;width:146px;height:595px;line-height:595px;background:#b3bdd2;color:#fff;font-size:12px;text-align:center;"></div>
<div style="left:1229px;top:109px;width:5px;height:595px;line-height:595px;background:#c6cad2;color:#fff;font-size:12px;text-align:center;"></div>
<div style="left:1234px;top:109px;width:64px;height:595px;line-height:595px;background:#b6c1c6;color:#fff;font-size:12px;text-align:center;"></div>
<div style="left:1084px;top:714px;width:214px;height:6px;line-height:6px;background:#9da1a9;color:#fff;font-size:12px;text-align:center;border-radius:3px;"></div>
<div style="left:1087.5px;top:113.5px;width:87px;height:19px;line-height:15px;background:linear-gradient(#ffffff,#f4f4f4);color:#111;font-size:12px;text-align:left;padding-left:3.5px;box-sizing:border-box;border:1px solid #b4b4b4;border-radius:3px;">Chan 1 A</div>
<div style="left:1160px;top:122px;width:0;height:0;border-left:4px solid transparent;border-right:4px solid transparent;border-top:4px solid #555;overflow:visible"></div>
<div style="left:1178px;top:114px;width:24px;height:18.5px;line-height:16px;background:linear-gradient(#5c8ad3,#4f78ba);color:#fff;font-size:12px;text-align:center;border-radius:3px;box-shadow:inset 0 0 0 1px rgba(90,80,70,0.18);">dup</div>
<div style="left:1206px;top:114px;width:19px;height:18.5px;line-height:16px;background:linear-gradient(#7a8280,#6e7675);color:#fff;font-size:12px;text-align:center;border-radius:3px;box-shadow:inset 0 0 0 1px rgba(90,80,70,0.18);">del</div>
<div style="left:1087.5px;top:139.5px;width:139px;height:19px;line-height:15px;background:#fff;color:#4a74c8;font-size:12px;text-align:left;padding-left:2px;box-sizing:border-box;border:1px solid #b4b4b4;border-radius:3px;">synth</div>
<div style="left:1087px;top:165px;width:140px;height:20px;line-height:18px;background:#5a80c4;color:#f4f06a;font-size:12px;text-align:center;">Waveform [1]</div>
<div style="left:1088px;top:191.8px;width:138px;height:18.5px;line-height:16px;background:linear-gradient(#8fb2f2,#6a90dc);color:#fff;font-size:12px;text-align:left;padding-left:4px;box-sizing:border-box;border-radius:3px;box-shadow:inset 0 0 0 1px rgba(90,80,70,0.18);">... change source to..</div>
<div style="left:1212px;top:200px;width:0;height:0;border-left:4px solid transparent;border-right:4px solid transparent;border-top:4px solid #e8eefa;overflow:visible"></div>
<div style="left:1088px;top:217.5px;width:138px;height:18.8px;line-height:16px;background:linear-gradient(#9cbcf6,#7a9ee6);color:#fff;font-size:12px;text-align:left;padding-left:4px;box-sizing:border-box;border-radius:3px;box-shadow:inset 0 0 0 1px rgba(90,80,70,0.18);">Out</div>
<div style="left:1212px;top:226px;width:0;height:0;border-left:4px solid transparent;border-right:4px solid transparent;border-top:4px solid #e8eefa;overflow:visible"></div>
<div style="left:1088px;top:244.8px;width:123px;height:18.5px;line-height:16px;background:linear-gradient(#5f8cd8,#4c74b8);color:#fff;font-size:12px;text-align:center;border-radius:3px;box-shadow:inset 0 0 0 1px rgba(90,80,70,0.18);">Flanger [1]</div>
<div style="left:1214px;top:245px;width:11px;height:18.5px;line-height:16px;background:linear-gradient(#7a8280,#6e7675);color:#fff;font-size:12px;text-align:center;border-radius:3px;box-shadow:inset 0 0 0 1px rgba(90,80,70,0.18);">d</div>
<div style="left:1087.5px;top:270px;width:139px;height:19px;line-height:16px;background:#efefef;color:#4a74c8;font-size:12px;text-align:left;padding-left:2px;box-sizing:border-box;border:1px solid #b4b4b4;border-radius:3px;">... drop audio insert 2</div>
<div style="left:1087.5px;top:296px;width:139px;height:19px;line-height:16px;background:#efefef;color:#4a74c8;font-size:12px;text-align:left;padding-left:2px;box-sizing:border-box;border:1px solid #b4b4b4;border-radius:3px;">... drop audio insert 3</div>
<div style="left:1087.5px;top:322px;width:139px;height:19px;line-height:16px;background:#efefef;color:#4a74c8;font-size:12px;text-align:left;padding-left:2px;box-sizing:border-box;border:1px solid #b4b4b4;border-radius:3px;">... drop audio insert 4</div>
<div style="left:1087.5px;top:348px;width:139px;height:19px;line-height:16px;background:#efefef;color:#4a74c8;font-size:12px;text-align:left;padding-left:2px;box-sizing:border-box;border:1px solid #b4b4b4;border-radius:3px;">... drop audio insert 5</div>
<div style="left:1087px;top:375px;width:125px;height:20px;line-height:20px;background:#5a80c4;color:#fff;font-size:12px;text-align:center;"></div>
<div style="left:1091px;top:380px;width:116px;height:10px;line-height:10px;background:#9ba4b6;color:#fff;font-size:12px;text-align:center;"></div>
<div style="left:1087px;top:375px;width:125px;height:20px;line-height:18px;background:transparent;color:#fff;font-size:12px;text-align:center;">Main Outs</div>
<div style="left:1214px;top:376px;width:11px;height:18.5px;line-height:16px;background:linear-gradient(#7a8280,#6e7675);color:#fff;font-size:12px;text-align:center;border-radius:3px;box-shadow:inset 0 0 0 1px rgba(90,80,70,0.18);">d</div>
<div style="left:1088px;top:402px;width:138px;height:18.5px;line-height:16px;background:linear-gradient(#9cbcf6,#7a9ee6);color:#fff;font-size:12px;text-align:left;padding-left:4px;box-sizing:border-box;border-radius:3px;box-shadow:inset 0 0 0 1px rgba(90,80,70,0.18);">Out 1 + 2</div>
<div style="left:1212px;top:410px;width:0;height:0;border-left:4px solid transparent;border-right:4px solid transparent;border-top:4px solid #e8eefa;overflow:visible"></div>
<div style="left:1088px;top:431px;width:9px;height:18px;line-height:18px;background:linear-gradient(#5c8ad3,#4f78ba);color:#fff;font-size:11px;text-align:center;border-radius:3px;box-shadow:0 0 0 0.5px rgba(60,60,60,0.35);">1</div>
<div style="left:1100px;top:431px;width:94px;height:18px;line-height:15px;background:#5a80c4;color:#fff;font-size:12px;text-align:center;border:1px solid #70747c;border-radius:4px;"></div>
<div style="left:1174px;top:432px;width:19px;height:16px;line-height:16px;background:linear-gradient(#fdfdfd,#e4e4e4);color:#fff;font-size:12px;text-align:center;border-radius:3px;"></div>
<div style="left:1183px;top:434px;width:2px;height:12px;line-height:12px;background:#111;color:#fff;font-size:12px;text-align:center;"></div>
<div style="left:1197.5px;top:430.5px;width:27.5px;height:19px;line-height:16px;background:#fff;color:#111;font-size:12px;text-align:left;padding-left:2px;box-sizing:border-box;border-radius:3px;border:1px solid #c8c8c8;">100</div>
<div style="left:1088px;top:454px;width:9px;height:18px;line-height:18px;background:linear-gradient(#f4f4f4,#dcdcdc);color:#fff;font-size:11px;text-align:center;border-radius:3px;box-shadow:0 0 0 0.5px rgba(60,60,60,0.35);"></div>
<div style="left:1100px;top:454px;width:94px;height:18px;line-height:15px;background:#5a80c4;color:#fff;font-size:12px;text-align:center;border:1px solid #70747c;border-radius:4px;"></div>
<div style="left:1101px;top:455px;width:19px;height:16px;line-height:16px;background:linear-gradient(#fdfdfd,#e4e4e4);color:#fff;font-size:12px;text-align:center;border-radius:3px;"></div>
<div style="left:1110px;top:457px;width:2px;height:12px;line-height:12px;background:#111;color:#fff;font-size:12px;text-align:center;"></div>
<div style="left:1197.5px;top:453.5px;width:27.5px;height:19px;line-height:16px;background:#fff;color:#111;font-size:12px;text-align:left;padding-left:2px;box-sizing:border-box;border-radius:3px;border:1px solid #c8c8c8;">0</div>
<div style="left:1088px;top:477px;width:9px;height:18px;line-height:18px;background:linear-gradient(#f4f4f4,#dcdcdc);color:#fff;font-size:11px;text-align:center;border-radius:3px;box-shadow:0 0 0 0.5px rgba(60,60,60,0.35);"></div>
<div style="left:1100px;top:477px;width:94px;height:18px;line-height:15px;background:#5a80c4;color:#fff;font-size:12px;text-align:center;border:1px solid #70747c;border-radius:4px;"></div>
<div style="left:1101px;top:478px;width:19px;height:16px;line-height:16px;background:linear-gradient(#fdfdfd,#e4e4e4);color:#fff;font-size:12px;text-align:center;border-radius:3px;"></div>
<div style="left:1110px;top:480px;width:2px;height:12px;line-height:12px;background:#111;color:#fff;font-size:12px;text-align:center;"></div>
<div style="left:1197.5px;top:476.5px;width:27.5px;height:19px;line-height:16px;background:#fff;color:#111;font-size:12px;text-align:left;padding-left:2px;box-sizing:border-box;border-radius:3px;border:1px solid #c8c8c8;">0</div>
<div style="left:1088px;top:500px;width:9px;height:18px;line-height:18px;background:linear-gradient(#f4f4f4,#dcdcdc);color:#fff;font-size:11px;text-align:center;border-radius:3px;box-shadow:0 0 0 0.5px rgba(60,60,60,0.35);"></div>
<div style="left:1100px;top:500px;width:94px;height:18px;line-height:15px;background:#5a80c4;color:#fff;font-size:12px;text-align:center;border:1px solid #70747c;border-radius:4px;"></div>
<div style="left:1101px;top:501px;width:19px;height:16px;line-height:16px;background:linear-gradient(#fdfdfd,#e4e4e4);color:#fff;font-size:12px;text-align:center;border-radius:3px;"></div>
<div style="left:1110px;top:503px;width:2px;height:12px;line-height:12px;background:#111;color:#fff;font-size:12px;text-align:center;"></div>
<div style="left:1197.5px;top:499.5px;width:27.5px;height:19px;line-height:16px;background:#fff;color:#111;font-size:12px;text-align:left;padding-left:2px;box-sizing:border-box;border-radius:3px;border:1px solid #c8c8c8;">0</div>
<div style="left:1088px;top:529px;width:8px;height:18px;line-height:18px;background:linear-gradient(#5c8ad3,#4f78ba);color:#fff;font-size:11px;text-align:center;border-radius:3px;">=</div>
<div style="left:1100px;top:529px;width:94px;height:18px;line-height:15px;background:#5a80c4;color:#fff;font-size:12px;text-align:center;border:1px solid #70747c;border-radius:4px;"></div>
<div style="left:1137px;top:530px;width:19px;height:16px;line-height:16px;background:linear-gradient(#fdfdfd,#e4e4e4);color:#fff;font-size:12px;text-align:center;border-radius:3px;"></div>
<div style="left:1146px;top:532px;width:2px;height:12px;line-height:12px;background:#111;color:#fff;font-size:12px;text-align:center;"></div>
<div style="left:1197.5px;top:527.5px;width:27.5px;height:19px;line-height:16px;background:#fff;color:#111;font-size:12px;text-align:left;padding-left:2px;box-sizing:border-box;border-radius:3px;border:1px solid #c8c8c8;">50</div>
<div style="left:1087px;top:562.0px;width:9px;height:7px;line-height:7px;background:#6a8acc;color:#fff;font-size:12px;text-align:center;"></div>
<div style="left:1087px;top:574.6px;width:9px;height:7px;line-height:7px;background:#4f70b0;color:#fff;font-size:12px;text-align:center;"></div>
<div style="left:1087px;top:587.2px;width:9px;height:7px;line-height:7px;background:#6a8acc;color:#fff;font-size:12px;text-align:center;"></div>
<div style="left:1087px;top:599.8px;width:9px;height:7px;line-height:7px;background:#4f70b0;color:#fff;font-size:12px;text-align:center;"></div>
<div style="left:1087px;top:612.4px;width:9px;height:7px;line-height:7px;background:#6a8acc;color:#fff;font-size:12px;text-align:center;"></div>
<div style="left:1087px;top:625.0px;width:9px;height:7px;line-height:7px;background:#4f70b0;color:#fff;font-size:12px;text-align:center;"></div>
<div style="left:1087px;top:637.6px;width:9px;height:7px;line-height:7px;background:#6a8acc;color:#fff;font-size:12px;text-align:center;"></div>
<div style="left:1087px;top:650.2px;width:9px;height:7px;line-height:7px;background:#4f70b0;color:#fff;font-size:12px;text-align:center;"></div>
<div style="left:1087px;top:662.8px;width:9px;height:7px;line-height:7px;background:#6a8acc;color:#fff;font-size:12px;text-align:center;"></div>
<div style="left:1087px;top:675.4px;width:9px;height:7px;line-height:7px;background:#4f70b0;color:#fff;font-size:12px;text-align:center;"></div>
<div style="left:1087px;top:688.0px;width:9px;height:7px;line-height:7px;background:#6a8acc;color:#fff;font-size:12px;text-align:center;"></div>
<div style="left:1101px;top:555px;width:18px;height:147px;line-height:144px;background:#5a80c4;color:#fff;font-size:12px;text-align:center;border:1px solid #70747c;border-radius:4px;"></div>
<div style="left:1102px;top:645.5px;width:16px;height:18.5px;line-height:18.5px;background:linear-gradient(#fdfdfd,#e0e0e0);color:#fff;font-size:12px;text-align:center;border-radius:3px;"></div>
<div style="left:1104px;top:653.5px;width:12px;height:2px;line-height:2px;background:#111;color:#fff;font-size:12px;text-align:center;"></div>
<div style="left:1122.5px;top:594.5px;width:51px;height:18.5px;line-height:15px;background:linear-gradient(#fdfdfd,#ececec);color:#4a74c8;font-size:12px;text-align:center;border:1px solid #b4b4b4;border-radius:3px;">[&nbsp;&nbsp;] Solo</div>
<div style="left:1122.5px;top:634.5px;width:51px;height:18.5px;line-height:15px;background:linear-gradient(#fdfdfd,#ececec);color:#7d848c;font-size:12px;text-align:center;border:1px solid #b4b4b4;border-radius:3px;">[&nbsp;&nbsp;] Mute</div>
<div style="left:1122.5px;top:674px;width:39px;height:19px;line-height:16px;background:#fff;color:#111;font-size:12px;text-align:left;padding-left:3px;box-sizing:border-box;border-radius:3px;border:1px solid #c8c8c8;">30</div>
<div style="left:1179px;top:555px;width:14px;height:8px;line-height:8px;background:#858585;color:#fff;font-size:12px;text-align:center;border-radius:3px;"></div>
<div style="left:1179.5px;top:567px;width:12px;height:134px;line-height:131px;background:linear-gradient(90deg,#e4e4e4,#d6d6d6);color:#fff;font-size:12px;text-align:center;border:1px solid #8a8a8a;border-radius:3px;"></div>
<div style="left:1180.5px;top:568px;width:10px;height:8px;line-height:8px;background:#f8f8f8;color:#fff;font-size:12px;text-align:center;"></div>
<div style="left:1180.5px;top:634px;width:10px;height:9px;line-height:9px;background:#f4f4f4;color:#fff;font-size:12px;text-align:center;"></div>
<div style="left:1180.5px;top:642px;width:10px;height:58px;line-height:58px;background:#0000ff;color:#fff;font-size:12px;text-align:center;"></div>
<div style="left:1180.5px;top:575.5px;width:10px;height:2px;line-height:2px;background:#777;color:#fff;font-size:12px;text-align:center;"></div>
<div style="left:1180.5px;top:632.5px;width:10px;height:2px;line-height:2px;background:#777;color:#fff;font-size:12px;text-align:center;"></div>
<div style="left:1185px;top:572px;width:1px;height:1px;line-height:1px;background:#444;color:#fff;font-size:12px;text-align:center;"></div>
<div style="left:1185px;top:638px;width:1px;height:1px;line-height:1px;background:#444;color:#fff;font-size:12px;text-align:center;"></div>
<div style="left:1197px;top:555px;width:14px;height:8px;line-height:8px;background:#858585;color:#fff;font-size:12px;text-align:center;border-radius:3px;"></div>
<div style="left:1197.5px;top:567px;width:12px;height:134px;line-height:131px;background:linear-gradient(90deg,#e4e4e4,#d6d6d6);color:#fff;font-size:12px;text-align:center;border:1px solid #8a8a8a;border-radius:3px;"></div>
<div style="left:1198.5px;top:568px;width:10px;height:8px;line-height:8px;background:#f8f8f8;color:#fff;font-size:12px;text-align:center;"></div>
<div style="left:1198.5px;top:634px;width:10px;height:9px;line-height:9px;background:#f4f4f4;color:#fff;font-size:12px;text-align:center;"></div>
<div style="left:1198.5px;top:642px;width:10px;height:58px;line-height:58px;background:#0000ff;color:#fff;font-size:12px;text-align:center;"></div>
<div style="left:1198.5px;top:575.5px;width:10px;height:2px;line-height:2px;background:#777;color:#fff;font-size:12px;text-align:center;"></div>
<div style="left:1198.5px;top:632.5px;width:10px;height:2px;line-height:2px;background:#777;color:#fff;font-size:12px;text-align:center;"></div>
<div style="left:1203px;top:572px;width:1px;height:1px;line-height:1px;background:#444;color:#fff;font-size:12px;text-align:center;"></div>
<div style="left:1203px;top:638px;width:1px;height:1px;line-height:1px;background:#444;color:#fff;font-size:12px;text-align:center;"></div>
<div style="left:1238.5px;top:113.5px;width:62px;height:19px;line-height:15px;background:linear-gradient(#ffffff,#f4f4f4);color:#111;font-size:12px;text-align:left;padding-left:3.5px;box-sizing:border-box;border:1px solid #b4b4b4;border-radius:3px;">Chan 2 C</div>
<div style="left:1238.5px;top:139.5px;width:62px;height:19px;line-height:16px;background:#fff;color:#fff;font-size:12px;text-align:center;border:1px solid #b4b4b4;border-radius:3px;"></div>
<div style="left:1238px;top:165px;width:140px;height:20px;line-height:18px;background:#6890a0;color:#fff;font-size:12px;text-align:center;">LFO [1]</div>
<div style="left:1239px;top:191.8px;width:60px;height:18.5px;line-height:16px;background:linear-gradient(#90b6c4,#6a94a4);color:#fff;font-size:12px;text-align:left;padding-left:4px;box-sizing:border-box;border-radius:3px;box-shadow:inset 0 0 0 1px rgba(90,80,70,0.18);">... change</div>
<div style="left:1239px;top:217.5px;width:60px;height:18.8px;line-height:16px;background:linear-gradient(#9cc0cc,#74a0b0);color:#fff;font-size:12px;text-align:left;padding-left:4px;box-sizing:border-box;border-radius:3px;box-shadow:inset 0 0 0 1px rgba(90,80,70,0.18);">Out</div>
<div style="left:1238.5px;top:244px;width:60px;height:19px;line-height:16px;background:#efefef;color:#6a94a8;font-size:12px;text-align:left;padding-left:2px;box-sizing:border-box;border:1px solid #b4b4b4;border-radius:3px;">... drop control</div>
<div style="left:1238.5px;top:270px;width:60px;height:19px;line-height:16px;background:#efefef;color:#6a94a8;font-size:12px;text-align:left;padding-left:2px;box-sizing:border-box;border:1px solid #b4b4b4;border-radius:3px;">... drop control</div>
<div style="left:1238.5px;top:296px;width:60px;height:19px;line-height:16px;background:#efefef;color:#6a94a8;font-size:12px;text-align:left;padding-left:2px;box-sizing:border-box;border:1px solid #b4b4b4;border-radius:3px;">... drop control</div>
<div style="left:1238.5px;top:322px;width:60px;height:19px;line-height:16px;background:#efefef;color:#6a94a8;font-size:12px;text-align:left;padding-left:2px;box-sizing:border-box;border:1px solid #b4b4b4;border-radius:3px;">... drop control</div>
<div style="left:1238.5px;top:348px;width:60px;height:19px;line-height:16px;background:#efefef;color:#6a94a8;font-size:12px;text-align:left;padding-left:2px;box-sizing:border-box;border:1px solid #b4b4b4;border-radius:3px;">... drop control</div>
<div style="left:1238px;top:374px;width:125px;height:20px;line-height:18px;background:#5a80c4;color:#f4f06a;font-size:12px;text-align:center;">Waveform [1]</div>
<div style="left:1239px;top:400.5px;width:60px;height:18.5px;line-height:16px;background:linear-gradient(#90b6c4,#6a94a4);color:#fff;font-size:12px;text-align:left;padding-left:4px;box-sizing:border-box;border-radius:3px;box-shadow:inset 0 0 0 1px rgba(90,80,70,0.18);">Frequency</div>
<div style="left:1238px;top:559.3px;width:9px;height:6.5px;line-height:6.5px;background:#7aa4b4;color:#fff;font-size:12px;text-align:center;"></div>
<div style="left:1238px;top:571.87px;width:9px;height:6.5px;line-height:6.5px;background:#5c8494;color:#fff;font-size:12px;text-align:center;"></div>
<div style="left:1238px;top:584.4399999999999px;width:9px;height:6.5px;line-height:6.5px;background:#7aa4b4;color:#fff;font-size:12px;text-align:center;"></div>
<div style="left:1238px;top:597.01px;width:9px;height:6.5px;line-height:6.5px;background:#5c8494;color:#fff;font-size:12px;text-align:center;"></div>
<div style="left:1238px;top:609.5799999999999px;width:9px;height:6.5px;line-height:6.5px;background:#7aa4b4;color:#fff;font-size:12px;text-align:center;"></div>
<div style="left:1238px;top:622.15px;width:9px;height:6.5px;line-height:6.5px;background:#5c8494;color:#fff;font-size:12px;text-align:center;"></div>
<div style="left:1238px;top:634.7199999999999px;width:9px;height:6.5px;line-height:6.5px;background:#7aa4b4;color:#fff;font-size:12px;text-align:center;"></div>
<div style="left:1238px;top:647.29px;width:9px;height:6.5px;line-height:6.5px;background:#5c8494;color:#fff;font-size:12px;text-align:center;"></div>
<div style="left:1238px;top:659.8599999999999px;width:9px;height:6.5px;line-height:6.5px;background:#7aa4b4;color:#fff;font-size:12px;text-align:center;"></div>
<div style="left:1238px;top:672.43px;width:9px;height:6.5px;line-height:6.5px;background:#5c8494;color:#fff;font-size:12px;text-align:center;"></div>
<div style="left:1238px;top:685.0px;width:9px;height:6.5px;line-height:6.5px;background:#7aa4b4;color:#fff;font-size:12px;text-align:center;"></div>
<div style="left:1252px;top:552.5px;width:18px;height:147px;line-height:144px;background:#6890a0;color:#fff;font-size:12px;text-align:center;border:1px solid #70747c;border-radius:4px;"></div>
<div style="left:1253px;top:642.5px;width:16px;height:18px;line-height:18px;background:linear-gradient(#fdfdfd,#e0e0e0);color:#fff;font-size:12px;text-align:center;border-radius:3px;"></div>
<div style="left:1255px;top:651px;width:12px;height:2px;line-height:2px;background:#111;color:#fff;font-size:12px;text-align:center;"></div>
<div style="left:1273px;top:591px;width:30px;height:18.5px;line-height:16px;background:linear-gradient(#7aa4b4,#6890a0);color:#fff;font-size:12px;text-align:left;padding-left:4px;box-sizing:border-box;border-radius:3px;box-shadow:inset 0 0 0 1px rgba(90,80,70,0.18);">[X] In</div>
<div style="left:1273px;top:631.5px;width:30px;height:18.5px;line-height:15px;background:linear-gradient(#fdfdfd,#ececec);color:#7d848c;font-size:12px;text-align:left;padding-left:5px;box-sizing:border-box;border:1px solid #b4b4b4;border-radius:3px;">[&nbsp;&nbsp;]</div>
<div style="left:1273px;top:670.5px;width:30px;height:19px;line-height:16px;background:#fff;color:#111;font-size:12px;text-align:left;padding-left:3px;box-sizing:border-box;border-radius:3px;border:1px solid #c8c8c8;">30</div>
<div style="left:1296px;top:0px;width:2px;height:109px;line-height:109px;background:#b9bcc4;color:#fff;font-size:12px;text-align:center;"></div>
<div style="left:1297px;top:109px;width:1px;height:291px;line-height:291px;background:rgba(90,98,108,0.6);color:#fff;font-size:12px;text-align:center;"></div>
<div style="left:589px;top:467px;width:492px;height:330px;background:#dcdcdc;border:1px solid #c4c4c4;border-radius:5px 5px 0 0;box-shadow:0 0 14px rgba(0,0,0,0.22);overflow:hidden"></div>
<div style="left:590px;top:468px;width:490px;height:21.5px;line-height:21.5px;background:linear-gradient(#f8f8f8,#eeeeee);color:#fff;font-size:12px;text-align:center;border-radius:5px 5px 0 0;border-bottom:1px solid #d0d0d0;"></div>
<div style="left:598px;top:472.8px;width:12px;height:12px;border-radius:6px;background:#dadada;border:0.5px solid #cdcdcd"></div>
<div style="left:618px;top:472.8px;width:12px;height:12px;border-radius:6px;background:#dadada;border:0.5px solid #cdcdcd"></div>
<div style="left:638px;top:472.8px;width:12px;height:12px;border-radius:6px;background:#dadada;border:0.5px solid #cdcdcd"></div>
<svg style="position:absolute;left:706px;top:472px" width="16" height="14" viewBox="0 0 16 14"><path d="M8 1 L14.5 3.5 L14.5 10.5 L8 13 L1.5 10.5 L1.5 3.5 Z" fill="#9a9a9a"/><path d="M8 1 L14.5 3.5 L8 6 L1.5 3.5 Z" fill="#c4c4c4"/><path d="M8 6 L14.5 3.5 L14.5 10.5 L8 13 Z" fill="#7c7c7c"/></svg>
<div style="left:726px;top:469.5px;width:240px;height:20px;line-height:19px;background:transparent;color:#a2a2a2;font-size:13.7px;text-align:left;-webkit-text-stroke:0;">Oscilloscope: Waveform [1] , Bus [ 46 ]</div>
<div style="left:594.5px;top:494.5px;width:99px;height:18.5px;line-height:17px;background:linear-gradient(#5c8ad3,#4f78ba);color:#fff;font-size:12px;text-align:center;border-radius:3px;box-shadow:inset 0 0 0 1px rgba(90,80,70,0.18);">[X] window on top</div>
<div style="left:708.5px;top:494.5px;width:39px;height:18.5px;line-height:17px;background:linear-gradient(#c682a2,#b87493);color:#fff;font-size:12px;text-align:center;border-radius:3px;box-shadow:inset 0 0 0 1px rgba(90,80,70,0.18);">help</div>
<div style="left:762.5px;top:494.5px;width:49.5px;height:18.5px;line-height:17px;background:linear-gradient(#7a8280,#6e7675);color:#fff;font-size:12px;text-align:center;border-radius:3px;box-shadow:inset 0 0 0 1px rgba(90,80,70,0.18);">stop</div>
<div style="left:816.5px;top:494.5px;width:49.5px;height:18.5px;line-height:17px;background:linear-gradient(#6c98a9,#5f8899);color:#fff;font-size:12px;text-align:center;border-radius:3px;box-shadow:inset 0 0 0 1px rgba(90,80,70,0.18);">start</div>
<div style="left:600px;top:522px;width:54px;height:20px;line-height:18px;background:#fff;color:#4a74c8;font-size:12px;text-align:center;">cycle freq</div>
<div style="left:657px;top:522px;width:39.5px;height:20px;line-height:17px;background:#fff;color:#111;font-size:12px;text-align:left;padding-left:3px;box-sizing:border-box;border:1px solid #b4b4b4;border-radius:3px;">0</div>
<div style="left:700.5px;top:524.5px;width:29px;height:15px;line-height:14px;background:linear-gradient(#5c8ad3,#4f78ba);color:#fff;font-size:12px;text-align:center;border-radius:3px;box-shadow:inset 0 0 0 1px rgba(90,80,70,0.18);">x 0.5</div>
<div style="left:734px;top:524.5px;width:29.5px;height:15px;line-height:14px;background:linear-gradient(#5c8ad3,#4f78ba);color:#fff;font-size:12px;text-align:center;border-radius:3px;box-shadow:inset 0 0 0 1px rgba(90,80,70,0.18);">x 2</div>
<div style="left:770px;top:522px;width:50px;height:20px;line-height:18px;background:#fff;color:#4a74c8;font-size:12px;text-align:center;">midi note</div>
<div style="left:822.5px;top:522px;width:44.5px;height:20px;line-height:17px;background:#fff;color:#111;font-size:12px;text-align:left;padding-left:5px;box-sizing:border-box;border:1px solid #b4b4b4;border-radius:3px;">...</div>
<div style="left:853px;top:530.5px;width:0;height:0;border-left:4px solid transparent;border-right:4px solid transparent;border-top:4px solid #555;overflow:visible"></div>
<div style="left:602px;top:552px;width:68px;height:21.5px;line-height:18.5px;background:linear-gradient(#ffffff,#f0f0f0);color:#111;font-size:12px;text-align:left;padding-left:4px;box-sizing:border-box;border:1px solid #b0b0b0;border-radius:3px;">Audio</div>
<div style="left:655px;top:561px;width:0;height:0;border-left:4px solid transparent;border-right:4px solid transparent;border-top:4px solid #555;overflow:visible"></div>
<div style="left:672px;top:552px;width:39px;height:21.5px;line-height:18.5px;background:#fff;color:#111;font-size:12px;text-align:center;border:1px solid #b4b4b4;border-radius:3px;">46</div>
<div style="left:713.5px;top:552px;width:38px;height:21.5px;line-height:18.5px;background:#fff;color:#111;font-size:12px;text-align:center;border:1px solid #b4b4b4;border-radius:3px;">1</div>
<div style="left:966.5px;top:552px;width:70px;height:21.5px;line-height:18.5px;background:linear-gradient(#ffffff,#f0f0f0);color:#111;font-size:12px;text-align:left;padding-left:4px;box-sizing:border-box;border:1px solid #b0b0b0;border-radius:3px;">Tracks</div>
<div style="left:1022px;top:561px;width:0;height:0;border-left:4px solid transparent;border-right:4px solid transparent;border-top:4px solid #555;overflow:visible"></div>
<div style="left:602px;top:576px;width:435px;height:185.5px;line-height:185.5px;background:#000;color:#fff;font-size:12px;text-align:center;"></div>
<div style="left:1040.5px;top:577px;width:12.5px;height:183px;line-height:180px;background:linear-gradient(90deg,#b4b4b4,#c4c4c4);color:#fff;font-size:12px;text-align:center;border:1px solid #a4a4a4;border-radius:4px;"></div>
<div style="left:1041.5px;top:637px;width:10.5px;height:18px;line-height:18px;background:linear-gradient(#ffffff,#e8e8e8);color:#fff;font-size:12px;text-align:center;border-radius:3px;"></div>
<div style="left:1042.5px;top:645px;width:8.5px;height:2px;line-height:2px;background:#111;color:#fff;font-size:12px;text-align:center;"></div>
<div style="left:603.5px;top:765.5px;width:432.5px;height:12px;line-height:9px;background:#b8b8b8;color:#fff;font-size:12px;text-align:center;border:1px solid #9c9c9c;border-radius:4px;"></div>
<div style="left:713.5px;top:766px;width:18px;height:11px;line-height:11px;background:linear-gradient(#ffffff,#e8e8e8);color:#fff;font-size:12px;text-align:center;border-radius:3px;"></div>
<div style="left:721.5px;top:767.5px;width:2.5px;height:8px;line-height:8px;background:#111;color:#fff;font-size:12px;text-align:center;"></div>
<svg style="position:absolute;left:0;top:0" width="1298" height="786" viewBox="0 0 1298 786"><defs><clipPath id="sc"><rect x="602" y="576" width="435" height="185.5"/></clipPath></defs><g clip-path="url(#sc)"><polygon points="602.0,668.6 602.0,678.0 622.6,725.0 622.6,745.5 622.6,584.0 623.2,605.0 678.4,732.0 678.7,741.7 678.7,595.4 679.3,603.0 734.5,731.0 734.8,731.6 734.8,600.0 735.4,600.5 790.6,729.0 790.9,735.7 790.9,596.8 791.5,605.0 846.7,731.0 847.0,744.0 847.0,584.4 847.6,603.0 902.8,733.0 903.1,746.0 903.1,584.4 903.7,602.0 958.9,730.0 959.2,735.7 959.2,591.7 959.8,604.0 1015.0,734.0 1015.3,748.0 1015.3,583.6 1015.9,604.0 1037.0,654.3 1037.0,668.6" fill="#a89000"/><polyline points="602.0,678.0 622.6,725.0 622.6,745.5 622.6,584.0 623.2,605.0 678.4,732.0 678.7,741.7 678.7,595.4 679.3,603.0 734.5,731.0 734.8,731.6 734.8,600.0 735.4,600.5 790.6,729.0 790.9,735.7 790.9,596.8 791.5,605.0 846.7,731.0 847.0,744.0 847.0,584.4 847.6,603.0 902.8,733.0 903.1,746.0 903.1,584.4 903.7,602.0 958.9,730.0 959.2,735.7 959.2,591.7 959.8,604.0 1015.0,734.0 1015.3,748.0 1015.3,583.6 1015.9,604.0 1037.0,654.3" fill="none" stroke="#f8dc00" stroke-width="1.2"/></g></svg>
</body></html>
